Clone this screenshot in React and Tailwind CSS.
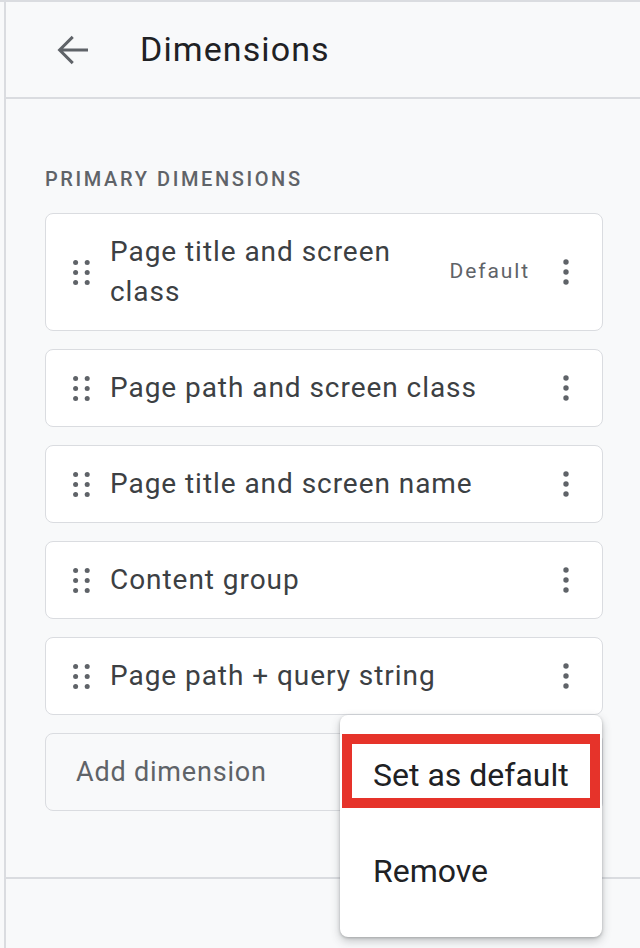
import React from "react";

function DragHandle() {
  return (
    <svg width="17" height="25" viewBox="0 0 17 25" className="shrink-0" fill="#5f6368">
      <circle cx="2.6" cy="2.6" r="2.5" />
      <circle cx="14.2" cy="2.6" r="2.5" />
      <circle cx="2.6" cy="12.5" r="2.5" />
      <circle cx="14.2" cy="12.5" r="2.5" />
      <circle cx="2.6" cy="22.4" r="2.5" />
      <circle cx="14.2" cy="22.4" r="2.5" />
    </svg>
  );
}

function Kebab() {
  return (
    <svg width="6" height="26" viewBox="0 0 6 26" className="shrink-0" fill="#5f6368">
      <circle cx="3" cy="3" r="2.7" />
      <circle cx="3" cy="13" r="2.7" />
      <circle cx="3" cy="23" r="2.7" />
    </svg>
  );
}

function DimensionCard({ label, isDefault }) {
  return (
    <div className="flex items-center rounded-lg border border-[#dadce0] bg-white py-[18px] pl-[27px] pr-[33px]">
      <DragHandle />
      <div className="ml-[20px] flex-1 text-[28px] leading-[40px] tracking-[0.95px] text-[#3c4043]">
        {label}
      </div>
      {isDefault && (
        <span className="ml-4 mr-[33px] text-[21px] tracking-[1.9px] text-[#5f6368]">Default</span>
      )}
      <Kebab />
    </div>
  );
}

export default function App() {
  const rows = [
    { label: "Page title and screen class", isDefault: true },
    { label: "Page path and screen class" },
    { label: "Page title and screen name" },
    { label: "Content group" },
    { label: "Page path + query string" },
  ];
  return (
    <div className="relative min-h-[948px] w-[640px] overflow-hidden border-t-2 border-[#dadce0] bg-[#f8f9fa] font-['Roboto',sans-serif]">
      <div className="ml-1 min-h-[946px] border-l-2 border-[#dadce0]">
        <header className="flex h-[97px] items-center border-b-2 border-[#dadce0] pl-[42px]">
          <svg width="48" height="48" viewBox="0 0 24 24" fill="#5f6368" className="shrink-0">
            <path d="M20 11.25H7.6l5.3-5.3L11.85 4.9 4.75 12l7.1 7.1 1.05-1.05-5.3-5.3H20z" />
          </svg>
          <h1 className="ml-[44px] text-[34px] font-normal tracking-[1.1px] text-[#202124]">Dimensions</h1>
        </header>

        <main className="pl-[39px] pr-[37px] pt-[68px]">
          <div className="text-[20px] font-medium leading-[24px] tracking-[2.6px] text-[#5f6368]">
            PRIMARY DIMENSIONS
          </div>
          <div className="mt-[22px] flex flex-col gap-[18px]">
            {rows.map((r) => (
              <DimensionCard key={r.label} label={r.label} isDefault={r.isDefault} />
            ))}
            <div className="flex h-[78px] items-center rounded-lg border border-[#dadce0] pl-[30px] text-[27px] tracking-[0.8px] text-[#5f6368]">
              Add dimension
            </div>
          </div>
        </main>

        <div className="mt-[66px] border-t-2 border-[#dadce0]" />
      </div>

      <div className="absolute left-[340px] top-[713px] h-[222px] w-[262px] rounded-lg bg-white pt-3 shadow-[0_4px_10px_rgba(60,64,67,0.28),0_1px_3px_rgba(60,64,67,0.3)]">
        <div className="flex h-24 items-center pl-[33px] text-[32px] text-[#202124]">Set as default</div>
        <div className="flex h-24 items-center pl-[33px] text-[32px] text-[#202124]">Remove</div>
        <div className="absolute left-[2px] top-[19px] h-[74px] w-[258px] border-[10px] border-[#e6332a]" />
      </div>
    </div>
  );
}
